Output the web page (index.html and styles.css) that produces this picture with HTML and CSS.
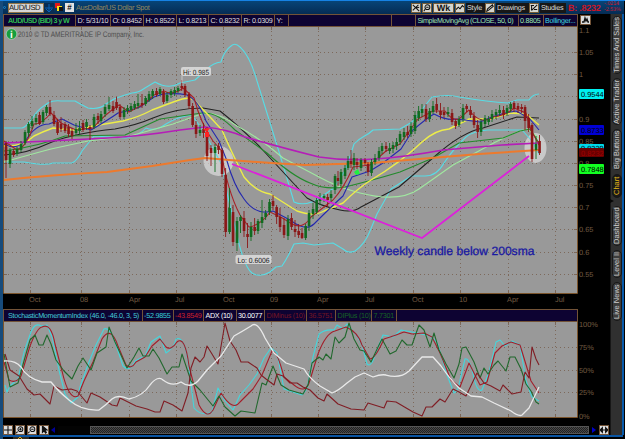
FILE: index.html
```html
<!DOCTYPE html>
<html lang="en"><head><meta charset="utf-8"><title>AUD/USD Chart</title><link rel="stylesheet" href="styles.css"></head>
<body>
<div class="window">
  <div class="workspace">
    <header class="titlebar">
      <span class="link-dot"></span><span class="symbol">AUD/USD</span><span class="picker"><svg width="10" height="10"><path d="M1 5h8M5 1v7M2 6l3 3 3-3" fill="none" stroke="#0a62b5"/></svg></span>
      <svg class="swatch" width="9" height="9"><path fill="#e01818" d="M0 0h5v5H0z"/><path fill="#f8e018" d="M2 3h5v5H2z"/><path fill="#111" d="M4 4h4v4H4z"/></svg>
      <span class="note">#</span><span class="name">AusDollar/US Dollar Spot</span>
      <span class="tools">
        <span class="tool"><svg viewBox="0 0 10 10"><path d="M1 1l8 8M1 8l7-7M5 5l4-1"/></svg></span>
        <span class="tool"><svg viewBox="0 0 10 10"><circle cx="5.5" cy="4" r="3"/><path d="M3 6L1 9M4 4h3"/></svg></span>
        <span class="tool wk">Wk</span>
        <span class="tool"><svg viewBox="0 0 10 10"><path d="M0 7l3-3 2 2 3-4 2 2"/></svg></span><span class="label style">Style</span>
        <span class="tool"><svg viewBox="0 0 10 10"><path d="M1 9l1-3 6-5 1 2-6 5z"/></svg></span><span class="label drawings">Drawings</span>
        <span class="tool"><svg viewBox="0 0 10 10"><path d="M1 2h4M2 2v6M2 8l7-7M5 7h4"/></svg></span><span class="label studies">Studies</span>
      </span>
      <span class="quote">B: .8232</span><span class="change"><span>-.0214</span><span>-2.53%</span></span>
    </header>
    <div class="inforow">
      <div class="info">
        <span class="cell c1">AUD/USD (BID) 3 y W</span><span class="cell c2">D: 5/31/10</span><span class="cell c3">O: 0.8452</span><span class="cell c4">H: 0.8522</span><span class="cell c5">L: 0.8213</span><span class="cell c6">C: 0.8232</span><span class="cell c7">R: 0.0309</span><span class="cell c8">Y:</span><span class="cell c9"></span><span class="cell c10"></span><span class="cell c11">SimpleMovingAvg (CLOSE, 50, 0)</span><span class="cell c12">0.8805</span><span class="cell c13">Bollinger...</span>
      </div>
      <span class="mini"><svg width="9" height="8"><path d="M1 6h2l1-4 1 3 1-2 1 3h1" fill="none" stroke="#111" stroke-width="1.3"/></svg></span>
    </div>
    <svg class="chart" width="607" height="282" viewBox="3 27 607 282">
      <path fill="#999" d="M4 27h573v266H4z"/>
      <g id="grid" class="grid"></g>
      <g class="edge"><path d="M577.5 27v266.5H3.5V27"/></g>
      <circle cx="218.500" cy="161" r="15" fill="#eee" opacity=".57"/><ellipse cx="535.500" cy="148" rx="11" ry="15" fill="#eee" opacity=".57"/>
      <g class="lines">
        <path stroke="#58dce5" d="M4 128H22C29 127 34 113 41 108L48 103Q54 100 61 101H75Q80 104 88 108Q99 110 106 104L114 99Q124 95 132 93Q138 93 145 88L155 82Q169 90 180 83L195 80L207 69Q213 63 221 62Q224 51 231 46Q235 42 240 47Q250 56 257 81L271 126L280 155L294 202Q302 206 315 201L334 188L346 169L354 144C361 136 366 137 373 130L400 129L412 122L432 97Q449 94 459 97Q489 102 508 103L517 100H529Q533 94 539 94"/>
        <path stroke="#58dce5" d="M4 162H24Q46 166 53 163H72Q77 161 82 151L94 136L126 138Q139 136 146 128Q155 132 166 124Q179 116 192 115L204 132L222 165L227 193L237 235Q244 267 252 273Q260 278 270 272L276 267L282 266Q288 257 294 244L303 243L314 245L333 243L343 249Q348 254 355 251Q365 244 370 231L377 214L391 189L402 182L411 176H425Q437 176 444 163Q454 148 466 137Q473 131 488 130H522L532 141L539 154"/>
        <path stroke="#222" d="M4 155Q26 154 52 142Q76 133 115 129Q137 125 153 118Q176 108 203 108L220 111Q239 126 260 147L307 198Q320 206 340 210Q353 213 361 207L399 187L434 157Q462 132 483 128L517 117L539 118"/>
        <path stroke="#a0e8a0" d="M4 162Q32 154 51 149L88 141L130 136L173 124L204 113Q220 113 237 126Q263 140 283 158L319 177Q337 187 360 193Q399 203 419 189L453 165L488 146Q514 132 527 129L539 138"/>
        <path stroke="#238a2c" d="M4 151Q40 146 65 136L125 135L160 119L202 113Q218 112 235 130L267 153Q292 176 310 183Q325 190 345 187Q370 181 400 172L433 158L459 143L503 138L520 131L530 129L539 143"/>
        <path stroke="#eded49" stroke-width="1.4" d="M4 146Q23 147 34 136Q42 132 53 128L74 130L93 126L123 121Q139 117 152 110L176 101Q188 96 194 100L211 118L222 130Q230 149 244 177Q256 192 270 194L297 211Q314 217 324 211L343 203Q357 189 371 180Q400 163 422 142Q435 130 449 129L469 119H490L511 113L526 114L539 125"/>
        <path stroke="#2428ae" d="M4 144Q17 151 26 140Q36 124 49 124L62 119L74 125L91 130Q108 120 118 113Q129 111 140 107L154 97L163 94Q178 93 187 95Q199 101 206 121L219 141L227 161Q234 186 244 199Q256 216 273 211L290 220Q306 232 314 224Q332 206 343 196L352 177L370 171L383 163L401 149L413 130Q427 118 434 114Q447 121 457 119L480 122Q497 114 516 111L529 118L539 130"/>
        <path stroke="#a82228" d="M4 141L17 150Q26 148 34 124Q42 124 51 113L61 123L76 130L93 128Q104 115 119 105L129 112L144 104L154 95L164 91Q173 96 183 88L194 98Q201 124 213 141L221 150Q227 190 240 215L249 227Q261 225 270 212Q282 217 292 224Q303 230 311 217L333 200Q344 188 353 167L370 165L386 151L400 144L418 119L433 111L445 111Q452 121 459 119L469 110Q481 126 493 117Q507 115 514 108L526 113L531 130L539 145"/>
        <path stroke="#b51db8" stroke-width="1.7" d="M4 143L49 141L108 138Q143 136 180 130L205 127Q226 129 245 137Q279 147 319 157Q345 161 375 159Q405 157 443 150L502 145L539 143"/>
        <path stroke="#ed7a2d" stroke-width="2" d="M4 180Q50 175 107 172L152 166L190 160L205 158Q251 162 305 165L372 163L431 158L479 154L539 150"/>
      </g>
      <g id="candles"></g>
      <path d="M232 164L422 238L529 156" fill="none" stroke="#dd20db" stroke-width="1.800"/>
      <path d="M205 132h4v5h-4zM203 129l4 3 3-4" fill="#f22" /><path d="M354 172l4-3 2 5-4 1z" fill="#20f040"/>
      <path d="M182 76v7" stroke="#c8c8c8" fill="none"/>
      <rect x="181" y="67" width="30" height="9" rx="2" fill="#d4d4d4"/><text x="183" y="74.500" textLength="26" lengthAdjust="spacingAndGlyphs" class="dark">Hi: 0.985</text>
      <rect x="235.500" y="255" width="36" height="9" rx="2" fill="#d4d4d4"/><text x="237.500" y="262.500" textLength="32" lengthAdjust="spacingAndGlyphs" class="dark">Lo: 0.6006</text>
      <circle cx="11.500" cy="34" r="5.300" fill="#159f3d" stroke="#c2ddc8" stroke-width=".6"/><text x="10" y="37.500" class="infoicon">i</text>
      <text x="18" y="37.300" textLength="126" lengthAdjust="spacingAndGlyphs" class="copyright">2010 © TD AMERITRADE IP Company, Inc.</text>
      <text x="374.500" y="255" textLength="160" lengthAdjust="spacingAndGlyphs" class="annotation">Weekly candle below 200sma</text>
      <g class="axis" id="axis"></g>
      <g class="tags"><rect x="579" y="89" width="25" height="10" rx="1" fill="#00f0f0"/><text x="581" y="97">0.9544</text><rect x="579" y="125" width="25" height="10" rx="1" fill="#0000d6"/><text x="581" y="133">0.8733</text><rect x="579" y="144" width="25" height="8" rx="1" fill="#00d8ea"/><text x="581" y="151">0.8339</text><rect x="579" y="148" width="25" height="9" rx="1" fill="#680000"/><text x="581" y="155.500" fill="#a00000">0.8232</text><rect x="579" y="164" width="25" height="10" rx="1" fill="#12ff22"/><text x="581" y="172">0.7848</text></g>
      <g class="months"><text x="29" y="302">Oct</text><text x="80" y="302">08</text><text x="129" y="302">Apr</text><text x="175" y="302">Jul</text><text x="223" y="302">Oct</text><text x="270" y="302">09</text><text x="317" y="302">Apr</text><text x="365" y="302">Jul</text><text x="412" y="302">Oct</text><text x="459" y="302">10</text><text x="507" y="302">Apr</text><text x="555" y="302">Jul</text></g>
    </svg>
    <div class="study"><span class="cell s1">StochasticMomentumIndex (46.0, -46.0, 3, 5)</span><span class="cell s2">-52.9855</span><span class="cell s3">-43.8549</span><span class="cell s4">ADX (10)</span><span class="cell s5">30.0077</span><span class="cell s6">DIMinus (10)</span><span class="cell s7">36.5751</span><span class="cell s8">DIPlus (10)</span><span class="cell s9">7.7301</span><span class="cell s10"></span></div>
    <svg class="oscillator" width="607" height="102" viewBox="3 321 607 102">
      <path fill="#999" d="M4 321h573v95H4z"/><g id="subgrid" class="grid"></g><path d="M577.500 321v95.500H3.500V321" class="subedge"/>
      <g class="lines">
        <path stroke="#45d6dc" d="M5 384L7 391L10 385L18 378L24 351L31 331Q35 321 41 325L47 324L52 336L59 369L65 393L71 402L78 396L80 386L89 361L96 344L104 328Q110 325 116 344L123 365Q130 372 135 360L145 355L151 341L160 335L166 352Q174 347 176 338Q184 334 188 360L194 407Q202 416 212 411L218 387L225 400L233 409L240 394L249 384L257 373L264 357L271 347L277 352L284 388L302 394L307 388L313 356L319 333Q325 328 334 329L337 324L343 328L347 323L357 335L362 344L367 363Q371 367 375 354L383 334L393 336L401 329L417 332L430 335L437 341L447 374L454 392Q458 391 460 379L465 358Q469 356 473 373Q477 392 482 389L489 371L496 341L500 339L505 345L512 340L520 344L526 380L532 396L539 400"/>
        <path stroke="#a31e2a" d="M4 361L9 379Q16 383 21 375L30 345Q37 327 42 326Q51 321 55 343L62 370Q69 400 78 395L84 380L93 361L102 338Q111 324 118 345L126 364Q131 369 136 361L145 356L152 345L160 338L166 346Q171 350 177 341Q185 334 189 365L199 404Q207 419 213 409L221 392Q233 411 240 401L253 388L262 374L272 350Q277 349 284 376L294 384Q306 394 310 379L318 353Q326 332 335 330L346 326Q358 331 362 344L370 358Q375 358 384 338Q394 335 404 331L412 333L424 332L432 336L440 352L451 379L460 386L469 362L480 384L487 381L495 352L502 345L511 341L520 344L531 380L539 392"/>
        <path stroke="#21682d" d="M4 353L10 386L18 382L24 360L30 339L35 334L39 344L43 344L47 334L51 343L56 359L64 370L72 378L78 365L83 357L91 369L97 352L106 346L109 326L115 341L127 367L134 356L139 347L143 355L149 355L153 348L159 357L167 373L172 366H179L182 353L191 380L200 389L213 405L219 395L225 406L235 415L241 410L255 412L262 382L266 384L273 365L281 384L289 389L303 393L308 384L312 362L319 356L323 359L326 353L331 358L335 336L339 342L345 336L349 322L354 338L360 349L364 350L371 361L379 344L382 338L390 353L396 350L402 339L407 344L412 344L419 324L424 329L430 346L434 332L439 349L446 363L454 377L459 363L462 347L466 346L474 361L480 377L484 367L488 373L494 364L498 360L506 370L510 356L515 356L521 368L526 383L531 390L536 401L539 403"/>
        <path stroke="#801e25" d="M5 353L10 369L19 375L27 388L34 394L40 393L50 403L54 385L62 389L71 388L77 390L87 402L91 392L100 396L112 404L117 405L120 397L136 405L147 408L155 411L160 411L164 400L173 404L182 410L188 392L191 367L195 356L200 361L204 356L207 345L212 353L218 363L225 322L230 340L236 349L241 361L248 361L257 367L261 374L266 378L274 384L277 373L283 375L290 382L297 382L303 386L310 389L318 397L324 400L327 393L338 403L351 408L364 409L368 402L384 407L387 400L396 401L413 411L422 415L426 406L432 406L440 398L445 401L453 388L459 391L466 395L477 372L484 382L491 385L500 390L503 384L512 393L521 391L525 371L529 377L532 346L536 358L539 364"/>
        <path stroke="#e9e9e9" stroke-width="1.300" d="M4 360Q15 359 21 366Q27 377 42 381H51Q58 390 69 399Q82 410 99 409Q106 404 112 398Q118 393 129 398Q143 395 150 384Q158 374 163 379Q172 386 181 381Q190 388 198 380L207 369L221 355L234 335Q243 330 251 325Q257 319 265 337L274 352L286 362L304 368Q309 377 320 385L332 392Q338 390 347 382L355 376L364 372L373 376Q381 373 386 374Q400 378 409 370L422 356H433L441 365Q450 378 459 387L471 395L482 396L494 402L511 410Q519 416 522 414L529 407L539 386"/>
      </g>
      <g class="axis"><text x="579" y="326">100%</text><text x="579" y="349">75%</text><text x="579" y="372">50%</text><text x="579" y="394">25%</text><text x="579" y="418">0%</text></g>
    </svg>
    <footer><span class="button"><svg viewBox="0 0 10 10"><path d="M5 0v10M0 5h10"/></svg></span><span class="button"><svg viewBox="0 0 10 10"><circle cx="5.500" cy="4" r="3"/><path d="M2 7L0 9M4 4h3M5.500 2.500v3"/></svg></span><span class="button"><svg viewBox="0 0 10 10"><circle cx="5.500" cy="4" r="3"/><path d="M2 7L0 9M4 4h3"/></svg></span><span class="button"><svg viewBox="0 0 10 10"><path d="M3 0v8l2-2 2 3 1-1-2-3h3z" class="solid"/></svg></span><span class="arrow left"></span><span class="track"><span class="thumb"></span></span><span class="arrow right"></span><span class="button last"><svg viewBox="0 0 10 10"><path d="M3 2L0 5l3 3V2zm4 0l3 3-3 3zM3 5h4" class="solid"/></svg></span></footer>
    <div class="bottom"><span class="expand"><svg width="7" height="4"><path d="M1 2l2-2 2 2M1 4l2-2 2 2" stroke="#dda71c" fill="none"/></svg></span></div>
  </div>
  <aside><span class="tab times">Times And Sales</span><span class="tab active-trader">Active Trader</span><span class="tab buttons">Big Buttons</span><span class="tab chart-tab">Chart</span><span class="tab dashboard">Dashboard</span><span class="tab level">Level II</span><span class="tab news">Live News</span></aside>
</div>
<script src="chart.js"></script>
</body></html>
```
FILE: styles.css
```css
*{box-sizing:border-box}
body{margin:0;width:625px;height:439px;overflow:hidden;background:#000;font:8px "Liberation Sans",sans-serif;color:#ddd;text-rendering:geometricPrecision}
.window{display:flex;width:625px;height:439px;border-top:1px solid #1682e4}
.workspace{width:610px;border-left:3px solid #174b7b;height:438px;flex:none}
.titlebar{height:13px;width:621px;background:linear-gradient(#074477,#052c54);display:flex;align-items:center;white-space:nowrap;position:relative}
.titlebar>*{flex:none}
.link-dot{width:3px;height:3px;border:1px solid #1684cd;border-radius:50%;margin-right:2px}
.symbol{width:36px;height:10px;background:#d6d6d6;border:1px solid #927548;color:#111;line-height:8px;font-size:7.6px;letter-spacing:-.45px}
.picker{width:10px;height:10px;background:#082d54}
.picker svg,.tool svg,.button svg{display:block}
.swatch{margin-left:1px;width:9px}
.note{width:9px;height:9px;background:#e3e3e3;color:#111;margin-left:1px;line-height:9px;text-align:center;font-weight:bold}
.name{color:#8e8661;margin-left:2px;font-size:7.4px;letter-spacing:-.4px}
.tools{display:flex;align-items:center;height:10px;margin-left:auto;width:157px}
.tool{width:10px;height:10px;background:#d5d5ce;border:1px solid #755b35;flex:none;margin-right:1px}
.tool svg{width:8px;height:8px}
.tool path,.tool circle,.button path,.button circle{fill:none;stroke:#111;stroke-width:1.3}
.button .solid{fill:#111}
.tool.wk{width:21px;text-align:center;color:#111;font-weight:bold;font-size:9px;line-height:8px}
.label{background:#171717;height:10px;line-height:10px;color:#ddd;font-size:7.2px;padding-left:1px;flex:none;letter-spacing:-.2px}
.style{width:19px}
.drawings{width:33px;letter-spacing:-.25px}
.studies{width:26px;letter-spacing:-.25px}
.quote{color:#cd1526;font-size:9px;font-weight:bold;width:36px;letter-spacing:-.25px}
.change{display:flex;flex-direction:column;color:#d31829;font-size:5.5px;line-height:5.5px;width:20px;letter-spacing:-.1px}
.inforow{height:13px;display:flex}
.info,.study{display:flex;width:575px;background:#0d0332;border:1px solid #735337;height:13px}
.cell{border-right:1px solid #735337;height:11px;line-height:11px;padding-left:1.5px;flex:none;white-space:nowrap;color:#ddd;font-size:7.2px;letter-spacing:-.25px}
.info .c1{width:72px;color:#2ebb51;font-weight:bold;padding-left:4px;letter-spacing:-.6px}
.c2{width:35px}
.c3,.c4,.c6,.c7{width:33px}
.c5{width:32px}
.c8{width:14px}
.c9{width:103px}
.c10{width:24px}
.info .c11{width:103px;color:#9ce5ae;letter-spacing:-.43px}
.info .c12{width:25px;color:#9ce5ae;padding-left:1px}
.info .c13{width:33px;color:#40dbe2;border:0;padding-left:1px}
.mini{width:11px;height:10px;background:#ddd;border:1px solid #735337;margin:1px 0 0 2px}
.mini svg{display:block}
.chart,.oscillator{display:block}
.grid{stroke:#796353;stroke-width:.9;stroke-dasharray:1 3;fill:none}
.edge,.subedge{fill:none;stroke:#7b542b}
.lines{fill:none;stroke-width:1.1;stroke-linejoin:round}
.chart{font-size:8px}
.dark{fill:#151515;font-size:7.5px}
.copyright{fill:#4d4d4d;font-size:8px}
.infoicon{fill:#fff;font:bold 10px "Liberation Sans",sans-serif}
.annotation{fill:#1919a2;stroke:#1919a2;stroke-width:.3;font-size:12px}
.axis,.months{fill:#735b42;font-size:7.4px}
.tags{font-size:7.4px}
.study .s1{width:139px;color:#43cbd9;padding-left:4px;letter-spacing:-.3px}
.study .s2{width:31px;color:#38ced8;padding-left:1px}
.study .s3{width:30px;color:#cc202c;padding-left:1px}
.study .s4{width:33px;color:#fff;letter-spacing:-.35px}
.study .s5{width:28px;color:#fff;padding-left:1px}
.study .s6{width:42px;color:#751524}
.study .s7{width:29px;color:#751524}
.study .s8{width:36px;color:#166426}
.study .s9{width:25px;color:#166426}
.study .s10{flex:1;border:0}
footer{height:11px;display:flex;width:607px;align-items:center}
.button{width:10px;height:10px;margin-right:2px;background:#ddd;border:1px solid #735337;flex:none}
.button.last{margin-right:1px}
.button svg{width:8px;height:8px}
.arrow{border:3px solid transparent;flex:none}
.left{border-right:4px solid #00009c;border-left:0;margin:0 3px 0 0}
.right{border-left:4px solid #0000cb;border-right:0;margin:0 3px}
.track{flex:1;height:8px;background:#030303;padding-left:32px}
.thumb{display:block;height:8px;border:1px solid #555;background:repeating-conic-gradient(#484848 0% 25%,#222 0% 50%) 0 0/2px 2px}
.bottom{height:4px;width:620px;border-top:2px solid #0a55a2;padding-left:10px}
.expand{display:block;width:16px;height:4px;background:#332d20;padding-left:4px}
.expand svg{display:block}
aside{width:14px;margin-top:13px;height:421px;border-right:2px solid #085aaa;border-left:1px solid #171717;background:#303030;display:flex;flex-direction:column;align-items:center;padding-top:2px;position:relative;flex:none}
aside::after{content:"";position:absolute;left:-1px;top:185px;border:2px solid transparent;border-left:4px solid #050505;border-right:0}
.tab{width:10px;border:1px solid #181818;border-radius:5px;background:#3c3c3c;color:#ccc;writing-mode:vertical-rl;transform:rotate(180deg);text-align:center;line-height:8px;white-space:nowrap;font-size:7.5px;flex:none;margin-bottom:4px}
.times{height:58px}
.active-trader{height:47px}
.buttons{height:41px}
.chart-tab{height:24px;color:#e4b818;background:#191919;margin-bottom:8px}
.dashboard{height:40px}
.level{height:28px}
.news{height:39px}
```
FILE: chart.js
```js
const NS = "http://www.w3.org/2000/svg";
const byId = id => document.getElementById(id);
function add(parent, tag, attrs, text) {
  const node = document.createElementNS(NS, tag);
  Object.entries(attrs).forEach(([k, v]) => node.setAttribute(k, v));
  if (text) node.textContent = text;
  parent.appendChild(node);
}
const months = [30.5,81.5,129.5,176.5,223.5,271.5,318.5,365.5,413.5,460.5,508.5,555.5];
months.forEach(x => {
  add(byId("grid"), "path", {d: `M${x} 27V293`});
  add(byId("subgrid"), "path", {d: `M${x} 321V416`});
  add(byId("grid"), "path", {d: `M${x} 27v3M${x} 290v3`, "stroke-dasharray": "none"});
  add(byId("subgrid"), "path", {d: `M${x} 321v3M${x} 413v3`, "stroke-dasharray": "none"});
});
["1.1","1.05","1","0.95","0.9","0.85","0.8","0.75","0.7","0.65","0.6","0.55"].forEach((label, i) => {
  const y = Math.round(30 + i * 22.15) + .5;
  if (i) add(byId("grid"), "path", {d: `M4 ${y}H577`});
  if (i && i !== 3) add(byId("grid"), "path", {d: `M4 ${y}h3M574 ${y}h4`, "stroke-dasharray": "none"});
  if (i !== 3) add(byId("axis"), "text", {x: 579, y: y + 2.5}, label);
});
[346.5,369.5,391.5].forEach(y => add(byId("subgrid"), "path", {d: `M4 ${y}H577`}));

// x, direction, body top, body bottom, high, low
const bars = `6 r 143 160 142 178;10 g 150 164 148 168;13.600 r 151 155 149 157;17 g 149 154 147 156;21 g 144 150 141 152;25 g 132 143 130 145;28.500 g 124 133 122 137;32 g 121 126 116 129;36 g 118 122 114 125;39.500 r 115 124 112 125;43 g 112 122 110 124;46.500 g 107 113 105 116;50 r 107 114 100 116;54 r 115 124 111 126;57.500 r 122 133 119 135;61 r 124 129 117 132;65 r 124 131 122 133;68.500 r 127 134 124 137;72 r 131 136 128 139;76 g 129 133 123 135;79.500 g 128 131 121 134;83 r 123 130 120 132;86.500 g 122 127 119 130;90 r 127 129 125 140;94 g 117 127 114 129;98 r 116 120 113 124;101 g 114 121 111 123;105 g 107 114 104 117;109 g 105 109 97 111;113 r 106 111 101 113;116.500 r 102 108 97 110;120 r 107 117 104 119;124 g 110 117 107 119;127.500 g 108 111 105 114;131 g 106 110 103 112;134.600 g 104 108 101 110;138 g 103 106 94 109;142 r 103 105 94 108;145.600 g 98 104 96 106;149 g 94 100 91 102;152.600 g 91 96 89 99;156.500 r 91 95 88 97;160 g 89 94 87 96;163.500 r 92 102 89 104;167 g 95 101 92 103;171 g 91 95 89 98;174.600 g 90 93 87 96;178 g 88 91 86 93;181.700 r 86 88 80 91;185 r 86 95 84 97;189 r 94 106 92 109;192.600 r 106 125 103 127;196 r 125 134 121 138;200 g 130 133 125 136;203.500 r 129 133 123 138;207 r 137 156 127 161;211 r 148 153 145 166;215 g 147 153 144 172;218.500 r 146 150 143 154;222 r 150 174 148 177;225.600 r 175 232 168 237;229.500 g 208 232 188 234;233 r 212 242 205 246;237 g 221 243 217 251;240.500 g 217 221 215 233;244 r 218 231 211 237;247.500 r 234 237 223 248;251 g 227 237 222 241;254.600 r 227 231 218 235;258 g 221 231 219 234;262 g 217 223 200 228;265.600 g 213 217 210 220;269.500 g 202 212 199 215;273 r 201 206 195 210;276.600 r 207 217 205 224;280 r 217 227 208 232;284 r 225 235 218 238;288 g 219 236 215 240;291.500 r 218 227 213 230;295 r 229 232 220 237;298.600 r 231 235 224 238;302 r 233 238 228 239;305.600 g 226 238 224 240;309 g 213 226 210 231;313 g 209 214 203 219;316.600 g 200 212 198 214;320 g 198 201 193 205;324 g 196 198 194 202;327.600 r 197 200 194 207;331 g 194 198 190 202;335 g 176 190 174 194;338 r 178 181 171 186;341 g 172 184 169 187;345 g 168 176 165 179;348 g 161 168 156 170;351 r 161 164 150 168;354 g 158 165 153 170;357 r 162 165 158 169;361 g 160 168 158 171;365 r 160 163 158 165;368 r 164 172 162 176;371.500 g 162 173 159 176;375 g 158 162 154 165;379 g 151 158 147 161;382 g 146 151 143 154;386 r 146 149 142 152;389.600 g 148 151 143 154;393 g 145 149 142 153;396.600 g 142 146 138 150;400 g 134 142 131 145;404 g 132 137 128 140;407.600 r 132 135 126 138;411 g 126 134 122 137;415 g 115 131 111 134;418.600 g 111 118 106 121;422 g 109 113 104 117;426 r 109 119 104 122;429.600 g 111 119 108 122;433 g 106 112 101 114;436.600 r 104 110 98 113;440.500 r 111 115 103 119;444 r 112 115 107 118;448 g 112 114 107 117;452 r 113 122 109 125;455.600 r 121 126 119 129;459 g 119 125 116 127;463 g 108 119 104 122;466.600 r 106 109 104 112;470.500 r 110 115 106 118;474 r 116 125 112 128;477.600 r 125 132 120 138;481 g 122 132 119 136;485 g 118 124 115 127;488.600 g 119 122 116 125;492 g 114 119 110 122;496 g 112 115 109 119;499.600 g 110 113 105 116;503.500 r 110 115 106 119;507 g 108 113 105 116;510.600 g 104 109 102 112;514 r 103 109 101 112;518 r 106 109 103 113;521.600 r 107 109 104 113;525 r 107 121 105 130;528.600 r 118 128 114 132;532 r 125 159 123 162;536 g 144 150 136 159;539.500 r 141 153 135 155`.split(";");
bars.forEach(row => {
  const [x, side, top, bottom, high, low] = row.split(" ");
  const fill = side === "g" ? "#106b20" : "#8a1717";
  add(byId("candles"), "path", {d: `M${x} ${high}V${low}`, stroke: fill, "stroke-width": .9});
  add(byId("candles"), "rect", {x: +x - 1.25, y: top, width: 2.6, height: bottom - top, fill});
});
```
